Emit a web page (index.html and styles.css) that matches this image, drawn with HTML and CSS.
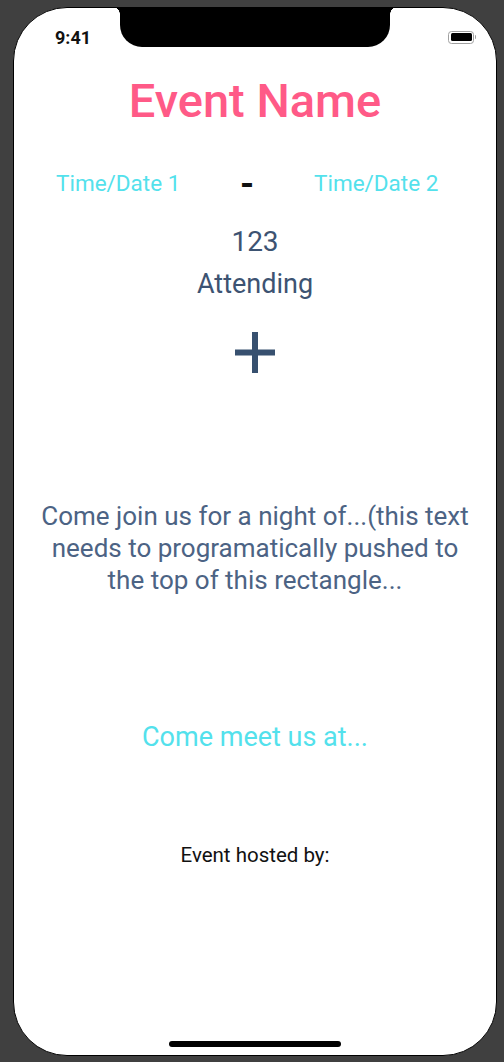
FILE: index.html
```html
<!DOCTYPE html>
<html>
<head>
<meta charset="utf-8">
<link rel="stylesheet" href="styles.css">
</head>
<body>
<div class="phone">
  <div class="notch"></div>
  <div class="status">
    <span class="time">9:41</span>
    <span class="battery"><span class="battery-fill"></span></span>
  </div>
  <h1 class="title">Event Name</h1>
  <div class="dates">
    <span class="date">Time/Date 1</span>
    <span class="dash">-</span>
    <span class="date">Time/Date 2</span>
  </div>
  <div class="count">123</div>
  <div class="attending">Attending</div>
  <div class="plus">
    <svg width="40" height="41" viewBox="0 0 40 41"><path d="M20 0v41M0 20.5h40" stroke="#37506f" stroke-width="6"/></svg>
  </div>
  <p class="desc">Come join us for a night of...(this text needs to programatically pushed to the top of this rectangle...</p>
  <div class="meet">Come meet us at...</div>
  <div class="host">Event hosted by:</div>
  <div class="spacer"></div>
  <div class="home"></div>
</div>
</body>
</html>
```
FILE: styles.css
```css
html, body {
  margin: 0;
  padding: 0;
  background: #404040;
}
body {
  padding: 7px 7px 6px 13px;
  font-family: "Roboto", "Liberation Sans", sans-serif;
}
.phone {
  position: relative;
  width: 484px;
  height: 1049px;
  box-sizing: border-box;
  background: #fff;
  border: 1px solid #000;
  border-radius: 54px;
  display: flex;
  flex-direction: column;
  align-items: center;
}
.notch {
  position: absolute;
  top: -1px;
  left: 106px;
  width: 270px;
  height: 40px;
  background: #000;
  border-radius: 0 0 22px 22px;
}
.notch::before,
.notch::after {
  content: "";
  position: absolute;
  top: 0;
  width: 7px;
  height: 7px;
}
.notch::before {
  left: -7px;
  background: radial-gradient(circle at 0 100%, transparent 6.5px, #000 7px);
}
.notch::after {
  right: -7px;
  background: radial-gradient(circle at 100% 100%, transparent 6.5px, #000 7px);
}
.status {
  align-self: stretch;
  display: flex;
  justify-content: space-between;
  align-items: center;
  padding: 20px 22px 0 41px;
  height: 20px;
}
.time {
  font-weight: 700;
  font-size: 18px;
  line-height: 20px;
  color: #111;
}
.battery {
  width: 26px;
  height: 13px;
  box-sizing: border-box;
  border: 1px solid #a0a0a0;
  border-radius: 3.5px;
  padding: 1.5px;
  display: flex;
  position: relative;
  margin-top: -2px;
}
.battery::after {
  content: "";
  position: absolute;
  right: -3px;
  top: 3.5px;
  width: 1.5px;
  height: 4px;
  background: #a0a0a0;
  border-radius: 0 1px 1px 0;
}
.battery-fill {
  flex: 1;
  background: #000;
  border-radius: 1.5px;
}
.title {
  margin: 25px 0 0;
  font-size: 47px;
  font-weight: 500;
  color: #ff5a87;
  line-height: 56px;
}
.dates {
  align-self: stretch;
  display: grid;
  grid-template-columns: 185px 73px auto;
  align-items: baseline;
  margin-top: 35px;
  padding-left: 42px;
  line-height: 30px;
}
.date {
  font-size: 22.5px;
  color: #53e1ec;
}
.dash {
  font-size: 36px;
  font-weight: 700;
  color: #111;
  position: relative;
  top: 5px;
  left: -1px;
}
.count {
  margin-top: 28px;
  font-size: 28px;
  color: #3d5372;
  line-height: 32px;
}
.attending {
  margin-top: 10px;
  font-size: 27px;
  color: #3d5372;
  line-height: 32px;
}
.plus {
  margin-top: 32px;
  height: 41px;
}
.plus svg {
  display: block;
}
.desc {
  margin: 127px 0 0;
  width: 436px;
  text-align: center;
  font-size: 26px;
  line-height: 32px;
  color: #4c6384;
}
.meet {
  margin-top: 125px;
  font-size: 27px;
  color: #53e1ec;
  line-height: 32px;
}
.host {
  margin-top: 90px;
  font-size: 20.5px;
  color: #111;
  line-height: 24px;
}
.spacer {
  flex: 1;
}
.home {
  width: 172px;
  height: 6px;
  border-radius: 3px;
  background: #000;
  margin-bottom: 8px;
}
```
